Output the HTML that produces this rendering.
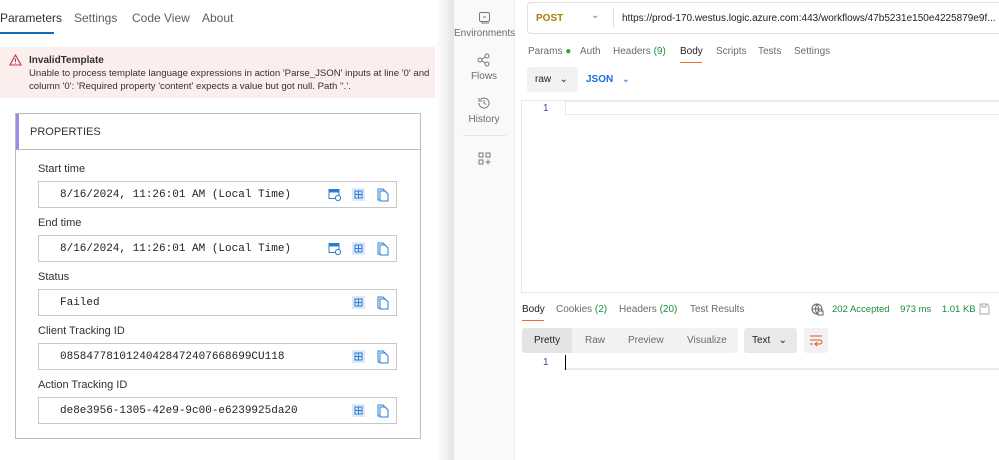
<!DOCTYPE html>
<html><head><style>
*{box-sizing:border-box;margin:0;padding:0}
body{width:999px;height:460px;overflow:hidden;font-family:"Liberation Sans",sans-serif;background:#fff;position:relative}
.a{position:absolute}
.lbl{font-size:11px;color:#323130;left:38px}
.inp{left:38px;width:359px;height:27px;border:1px solid #c8c8c8;background:#fff;font-family:"Liberation Mono",monospace;font-size:11px;color:#222;padding:7px 0 0 21px}
.t{font-size:10px;color:#6b6b6b}
.pm{font-size:10px;color:#6b6b6b;text-align:center;width:60px;left:454px}
</style></head><body>
<!-- left panel -->
<div class="a" style="left:0;top:11px;font-size:12px;color:#323130">Parameters</div>
<div class="a" style="left:0;top:32px;width:54px;height:2px;background:#0f6cbd"></div>
<div class="a" style="left:74px;top:11px;font-size:12px;color:#605e5c">Settings</div>
<div class="a" style="left:132px;top:11px;font-size:12px;color:#605e5c">Code View</div>
<div class="a" style="left:202px;top:11px;font-size:12px;color:#605e5c">About</div>
<div class="a" style="left:0;top:47px;width:435px;height:51px;background:#fdeeee"></div>
<svg class="a" style="left:9px;top:54px" width="13" height="12" viewBox="0 0 13 12"><path d="M6.5 1L12 11H1Z" fill="none" stroke="#c4314b" stroke-width="1.1"/><path d="M6.5 4.5v3.5M6.5 9v.8" stroke="#c4314b"/></svg>
<div class="a" style="left:29px;top:55px;font-size:10px;font-weight:bold;color:#323130">InvalidTemplate</div>
<div class="a" style="left:29px;top:67px;font-size:9.6px;color:#323130;line-height:13px;width:405px">Unable to process template language expressions in action 'Parse_JSON' inputs at line '0' and column '0': 'Required property 'content' expects a value but got null. Path ''.'.</div>
<div class="a" style="left:15px;top:113px;width:406px;height:326px;border:1px solid #bdbdbd"></div>
<div class="a" style="left:16px;top:114px;width:404px;height:36px;border-left:3px solid #a28be8;border-bottom:1px solid #bdbdbd;font-size:11px;color:#323130;padding:12px 0 0 11px">PROPERTIES</div>

<div class="a lbl" style="top:163px">Start time</div>
<div class="a inp" style="top:181px">8/16/2024, 11:26:01 AM (Local Time)</div>
<div class="a lbl" style="top:217px">End time</div>
<div class="a inp" style="top:235px">8/16/2024, 11:26:01 AM (Local Time)</div>
<div class="a lbl" style="top:271px">Status</div>
<div class="a inp" style="top:289px">Failed</div>
<div class="a lbl" style="top:325px">Client Tracking ID</div>
<div class="a inp" style="top:343px">08584778101240428472407668699CU118</div>
<div class="a lbl" style="top:379px">Action Tracking ID</div>
<div class="a inp" style="top:397px">de8e3956-1305-42e9-9c00-e6239925da20</div>

<svg width="0" height="0" style="position:absolute"><defs>
<g id="cal"><rect x="1" y="1.5" width="10" height="9" fill="none" stroke="#2b7cd3"/><rect x="1" y="1.5" width="10" height="3" fill="#2b7cd3"/><circle cx="10" cy="10" r="2.6" fill="#fff" stroke="#2b7cd3"/></g>
<g id="grid"><rect x="0" y="0" width="13" height="13" fill="#dce9f8"/><rect x="3" y="3" width="7" height="7" fill="none" stroke="#2b7cd3"/><path d="M6.5 3v7M3 6.5h7" stroke="#2b7cd3"/></g>
<g id="cp"><path d="M2 1h5l3 3v8H2z" fill="#fff" stroke="#2b7cd3"/><path d="M4 3h5l3 3v7H4z" fill="#fff" stroke="#2b7cd3"/></g>
</defs></svg>
<svg class="a" style="left:328px;top:188px" width="14" height="14"><use href="#cal"/></svg>
<svg class="a" style="left:352px;top:188px" width="13" height="13"><use href="#grid"/></svg>
<svg class="a" style="left:376px;top:188px" width="13" height="14"><use href="#cp"/></svg>
<svg class="a" style="left:328px;top:242px" width="14" height="14"><use href="#cal"/></svg>
<svg class="a" style="left:352px;top:242px" width="13" height="13"><use href="#grid"/></svg>
<svg class="a" style="left:376px;top:242px" width="13" height="14"><use href="#cp"/></svg>
<svg class="a" style="left:352px;top:296px" width="13" height="13"><use href="#grid"/></svg>
<svg class="a" style="left:376px;top:296px" width="13" height="14"><use href="#cp"/></svg>
<svg class="a" style="left:352px;top:350px" width="13" height="13"><use href="#grid"/></svg>
<svg class="a" style="left:376px;top:350px" width="13" height="14"><use href="#cp"/></svg>
<svg class="a" style="left:352px;top:404px" width="13" height="13"><use href="#grid"/></svg>
<svg class="a" style="left:376px;top:404px" width="13" height="14"><use href="#cp"/></svg>

<div class="a" style="left:436px;top:0;width:18px;height:460px;background:linear-gradient(to right,#fff,#e4e4e4)"></div>
<div class="a" style="left:454px;top:0;width:61px;height:460px;background:#f9f9f9;border-right:1px solid #ececec"></div>
<svg class="a" style="left:478px;top:11px" width="14" height="14"><rect x="1.5" y="1.5" width="10" height="9" rx="1.5" fill="none" stroke="#777"/><path d="M4 10v2h7" fill="none" stroke="#777"/><path d="M5 6h3" stroke="#777"/></svg>
<div class="a pm" style="top:28px">Environments</div>
<svg class="a" style="left:477px;top:53px" width="14" height="14" fill="none" stroke="#777"><circle cx="3" cy="7" r="2"/><circle cx="10" cy="3" r="2"/><circle cx="10" cy="11" r="2"/><path d="M5 6l3-2M5 8l3 2"/></svg>
<div class="a pm" style="top:71px">Flows</div>
<svg class="a" style="left:477px;top:96px" width="14" height="14" fill="none" stroke="#777"><path d="M2 7a5 5 0 1 0 1.5-3.5"/><path d="M2 2v3h3"/><path d="M7 4v3l2 1.5"/></svg>
<div class="a pm" style="top:114px">History</div>
<div class="a" style="left:463px;top:135px;width:43px;height:1px;background:#e6e6e6"></div>
<svg class="a" style="left:478px;top:152px" width="13" height="13" fill="none" stroke="#777"><rect x="1" y="1" width="4" height="4"/><rect x="8" y="1" width="4" height="4"/><rect x="1" y="8" width="4" height="4"/><path d="M10 7.5v5M7.5 10h5"/></svg>

<div class="a" style="left:527px;top:2px;width:480px;height:32px;border:1px solid #e0e0e0;border-radius:4px"></div>
<div class="a" style="left:536px;top:13px;font-size:10px;font-weight:bold;color:#ad7a03">POST</div>
<div class="a" style="left:591px;top:10px;font-size:10px;color:#777">⌄</div>
<div class="a" style="left:613px;top:8px;width:1px;height:20px;background:#e0e0e0"></div>
<div class="a" style="left:622px;top:13px;font-size:10px;color:#222;white-space:nowrap">https://prod-170.westus.logic.azure.com:443/workflows/47b5231e150e4225879e9f...</div>

<div class="a t" style="left:528px;top:46px">Params <span style="color:#28a745">●</span></div>
<div class="a t" style="left:580px;top:46px">Auth</div>
<div class="a t" style="left:613px;top:46px">Headers <span style="color:#1d8a3a">(9)</span></div>
<div class="a t" style="left:680px;top:46px;color:#222">Body</div>
<div class="a" style="left:680px;top:62px;width:22px;height:1px;background:#f26b3a"></div>
<div class="a t" style="left:716px;top:46px">Scripts</div>
<div class="a t" style="left:758px;top:46px">Tests</div>
<div class="a t" style="left:794px;top:46px">Settings</div>

<div class="a" style="left:527px;top:67px;width:51px;height:25px;background:#f2f2f2;border-radius:3px;font-size:10px;color:#222;padding:7px 0 0 8px">raw &nbsp; ⌄</div>
<div class="a" style="left:586px;top:74px;font-size:10px;font-weight:bold;color:#1a6fd8">JSON &nbsp; <span style="font-weight:normal">⌄</span></div>

<div class="a" style="left:521px;top:100px;width:490px;height:193px;border:1px solid #e6e6e6"></div>
<div class="a" style="left:543px;top:103px;font-size:10px;color:#3a4a8a">1</div>
<div class="a" style="left:565px;top:101px;width:440px;height:14px;border:1px solid #ebebeb"></div>

<div class="a t" style="left:522px;top:304px;color:#222">Body</div>
<div class="a" style="left:522px;top:320px;width:22px;height:1px;background:#f26b3a"></div>
<div class="a t" style="left:556px;top:304px">Cookies <span style="color:#1d8a3a">(2)</span></div>
<div class="a t" style="left:619px;top:304px">Headers <span style="color:#1d8a3a">(20)</span></div>
<div class="a t" style="left:690px;top:304px">Test Results</div>
<svg class="a" style="left:811px;top:303px" width="13" height="13" fill="none" stroke="#666"><circle cx="6" cy="6" r="5"/><path d="M1 6h10M6 1c-2 3-2 7 0 10M6 1c2 3 2 7 0 10"/><rect x="7" y="8" width="5" height="4" fill="#fff"/></svg>
<div class="a" style="left:832px;top:304px;font-size:9.5px;color:#1d8a3a;white-space:nowrap">202 Accepted &nbsp;&nbsp; 973 ms &nbsp;&nbsp; 1.01 KB</div>
<svg class="a" style="left:979px;top:303px" width="11" height="12" fill="none" stroke="#aaa"><path d="M1 1h7l2 2v8H1z"/><rect x="3" y="1" width="4" height="3"/></svg>

<div class="a" style="left:522px;top:328px;width:216px;height:25px;background:#f2f2f2;border-radius:3px"></div>
<div class="a" style="left:522px;top:328px;width:50px;height:25px;background:#e4e4e4;border-radius:3px 0 0 3px;font-size:10px;color:#222;padding:7px 0 0 12px">Pretty</div>
<div class="a t" style="left:585px;top:335px">Raw</div>
<div class="a t" style="left:628px;top:335px">Preview</div>
<div class="a t" style="left:687px;top:335px">Visualize</div>
<div class="a" style="left:744px;top:328px;width:53px;height:25px;background:#e9e9e9;border-radius:3px;font-size:10px;color:#222;padding:7px 0 0 8px">Text &nbsp; ⌄</div>
<div class="a" style="left:804px;top:328px;width:24px;height:25px;background:#f2f2f2;border-radius:3px"></div>
<svg class="a" style="left:809px;top:334px" width="14" height="13" fill="none" stroke="#e0522a"><path d="M1 2h12M1 6h10a2 2 0 0 1 0 4H7M1 10h3"/><path d="M8 8l-2 2 2 2"/></svg>
<div class="a" style="left:543px;top:357px;font-size:10px;color:#3a4a8a">1</div>
<div class="a" style="left:564px;top:356px;width:440px;height:14px;border-bottom:2px solid #ebebeb"></div>
<div class="a" style="left:565px;top:355px;width:1px;height:15px;background:#000"></div>
</body></html>
